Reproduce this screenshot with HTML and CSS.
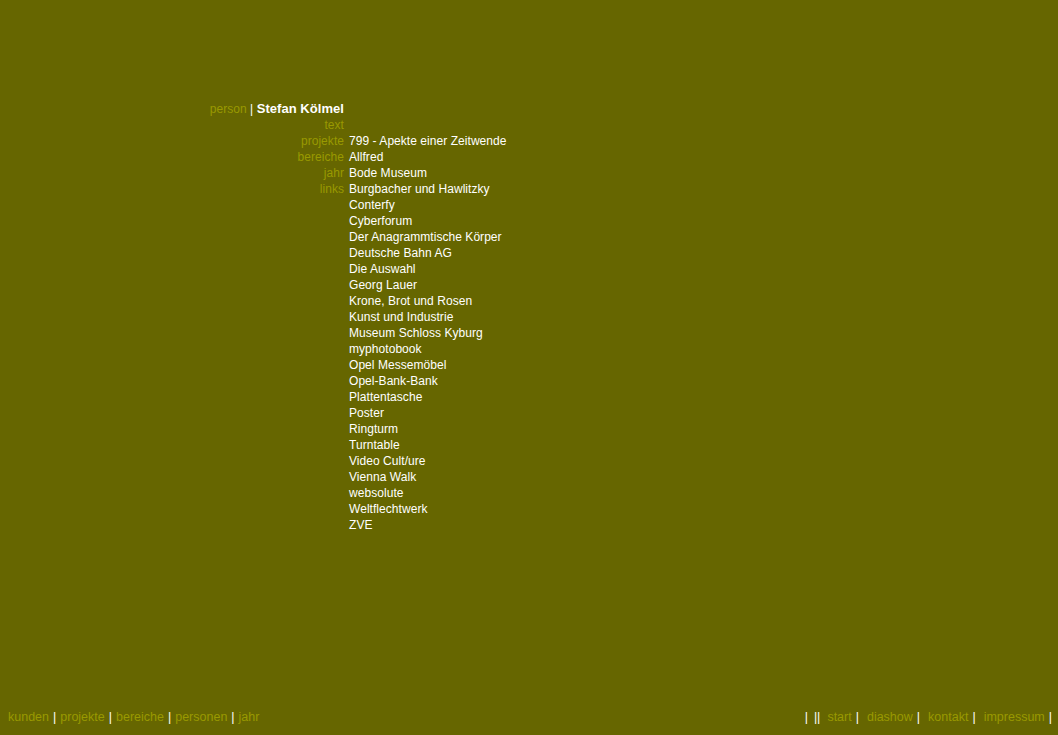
FILE: index.html
```html
<!DOCTYPE html>
<html lang="de">
<head>
<meta charset="utf-8">
<title>person | Stefan Kölmel</title>
<link rel="stylesheet" href="styles.css">
</head>
<body>
<div class="page">
  <main class="content">
    <div class="labels">
      <div class="head"><span class="lbl">person</span> <span class="sep">|</span> <b class="name">Stefan Kölmel</b></div>
      <div class="lbl">text</div>
      <div class="lbl">projekte</div>
      <div class="lbl">bereiche</div>
      <div class="lbl">jahr</div>
      <div class="lbl">links</div>
    </div>
    <ul class="values">
      <li>799 - Apekte einer Zeitwende</li>
      <li>Allfred</li>
      <li>Bode Museum</li>
      <li>Burgbacher und Hawlitzky</li>
      <li>Conterfy</li>
      <li>Cyberforum</li>
      <li>Der Anagrammtische Körper</li>
      <li>Deutsche Bahn AG</li>
      <li>Die Auswahl</li>
      <li>Georg Lauer</li>
      <li>Krone, Brot und Rosen</li>
      <li>Kunst und Industrie</li>
      <li>Museum Schloss Kyburg</li>
      <li>myphotobook</li>
      <li>Opel Messemöbel</li>
      <li>Opel-Bank-Bank</li>
      <li>Plattentasche</li>
      <li>Poster</li>
      <li>Ringturm</li>
      <li>Turntable</li>
      <li>Video Cult/ure</li>
      <li>Vienna Walk</li>
      <li>websolute</li>
      <li>Weltflechtwerk</li>
      <li>ZVE</li>
    </ul>
  </main>
  <footer class="footer">
    <nav class="nav-left">
      <a>kunden</a><span class="sep">|</span><a>projekte</a><span class="sep">|</span><a>bereiche</a><span class="sep">|</span><a>personen</a><span class="sep">|</span><a>jahr</a>
    </nav>
    <nav class="nav-right">
      <span class="sep first">|</span><span class="sep double">||</span><a>start</a><span class="sep">|</span><a>diashow</a><span class="sep">|</span><a>kontakt</a><span class="sep">|</span><a>impressum</a><span class="sep end">|</span>
    </nav>
  </footer>
</div>
</body>
</html>
```
FILE: styles.css
```css
html, body {
  margin: 0;
  padding: 0;
  background: #666600;
}
body {
  font-family: "Liberation Sans", Arial, sans-serif;
  font-size: 12px;
  line-height: 16px;
  color: #ffffff;
}
.page {
  height: 100vh;
  display: flex;
  flex-direction: column;
  justify-content: space-between;
}
.content {
  display: flex;
  align-items: flex-start;
  padding-top: 101px;
  letter-spacing: 0.05px;
}
.labels {
  width: 344px;
  text-align: right;
  color: #999900;
}
.lbl { color: #999900; }
.sep { color: #ffffff; }
.name {
  color: #ffffff;
  font-size: 13px;
  font-weight: bold;
}
.values {
  list-style: none;
  margin: 32px 0 0 5px;
  padding: 0;
}
.values li { color: #ffffff; }
.footer {
  display: flex;
  justify-content: space-between;
  padding: 0 6px 10px 8px;
  font-size: 12.5px;
}
.footer a {
  color: #999900;
  text-decoration: none;
}
.nav-left .sep {
  margin: 0 4px 0 4px;
}
.nav-right .sep {
  margin: 0 8px 0 4px;
}
.nav-right .sep.first {
  margin: 0 3px 0 0;
}
.nav-right .sep.double {
  margin: 0 7px 0 3px;
}
.nav-right .sep.end {
  margin-right: 0;
}
```
